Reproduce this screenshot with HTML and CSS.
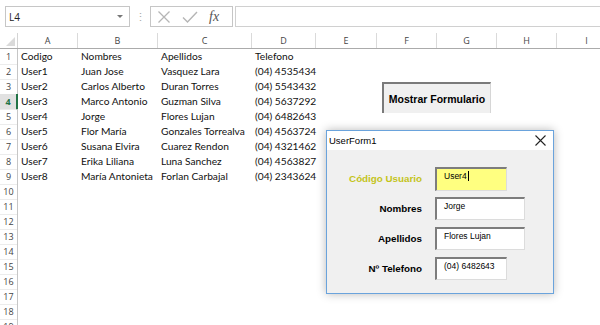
FILE: index.html
```html
<!DOCTYPE html>
<html lang="es">
<head>
    <meta charset="UTF-8">
    <title>Libro1 - UserForm1</title>
    <link rel="stylesheet" href="styles.css">
</head>
<body>
    <div class="screen">
        <div class="formula-bar">
            <div class="name-box">L4<span class="caret"></span></div>
            <div class="grip">&#8942;</div>
            <div class="fx-tools">
                <svg class="tool" width="14" height="14" viewBox="0 0 14 14">
                    <path d="M1.5 1.5L12.5 12.5M12.5 1.5L1.5 12.5" stroke="#b5b5b5" stroke-width="1.3" fill="none"/>
                </svg>
                <svg class="tool" width="16" height="14" viewBox="0 0 16 14">
                    <path d="M1 7.5L5.5 12L15 2" stroke="#b5b5b5" stroke-width="1.4" fill="none"/>
                </svg>
                <span class="fx">fx</span>
            </div>
            <div class="formula-input"></div>
        </div>

        <div class="sheet">
            <div class="row head">
                <div class="corner"><span class="tri"></span></div>
                <div class="col-head">A</div>
                <div class="col-head">B</div>
                <div class="col-head">C</div>
                <div class="col-head">D</div>
                <div class="col-head">E</div>
                <div class="col-head">F</div>
                <div class="col-head">G</div>
                <div class="col-head">H</div>
                <div class="col-head">I</div>
            </div>
            <div class="row">
                <div class="num">1</div>
                <div class="cell">Codigo</div>
                <div class="cell">Nombres</div>
                <div class="cell">Apellidos</div>
                <div class="cell">Telefono</div>
            </div>
            <div class="row">
                <div class="num">2</div>
                <div class="cell">User1</div>
                <div class="cell">Juan Jose</div>
                <div class="cell">Vasquez Lara</div>
                <div class="cell">(04) 4535434</div>
            </div>
            <div class="row">
                <div class="num">3</div>
                <div class="cell">User2</div>
                <div class="cell">Carlos Alberto</div>
                <div class="cell">Duran Torres</div>
                <div class="cell">(04) 5543432</div>
            </div>
            <div class="row">
                <div class="num selected">4</div>
                <div class="cell">User3</div>
                <div class="cell">Marco Antonio</div>
                <div class="cell">Guzman Silva</div>
                <div class="cell">(04) 5637292</div>
            </div>
            <div class="row">
                <div class="num">5</div>
                <div class="cell">User4</div>
                <div class="cell">Jorge</div>
                <div class="cell">Flores Lujan</div>
                <div class="cell">(04) 6482643</div>
            </div>
            <div class="row">
                <div class="num">6</div>
                <div class="cell">User5</div>
                <div class="cell">Flor María</div>
                <div class="cell">Gonzales Torrealva</div>
                <div class="cell">(04) 4563724</div>
            </div>
            <div class="row">
                <div class="num">7</div>
                <div class="cell">User6</div>
                <div class="cell">Susana Elvira</div>
                <div class="cell">Cuarez Rendon</div>
                <div class="cell">(04) 4321462</div>
            </div>
            <div class="row">
                <div class="num">8</div>
                <div class="cell">User7</div>
                <div class="cell">Erika Liliana</div>
                <div class="cell">Luna Sanchez</div>
                <div class="cell">(04) 4563827</div>
            </div>
            <div class="row">
                <div class="num">9</div>
                <div class="cell">User8</div>
                <div class="cell">María Antonieta</div>
                <div class="cell">Forlan Carbajal</div>
                <div class="cell">(04) 2343624</div>
            </div>
            <div class="row"><div class="num">10</div></div>
            <div class="row"><div class="num">11</div></div>
            <div class="row"><div class="num">12</div></div>
            <div class="row"><div class="num">13</div></div>
            <div class="row"><div class="num">14</div></div>
            <div class="row"><div class="num">15</div></div>
            <div class="row"><div class="num">16</div></div>
            <div class="row"><div class="num">17</div></div>
            <div class="row"><div class="num">18</div></div>
            <div class="row"><div class="num">19</div></div>
        </div>

        <!-- ActiveX button sitting on the sheet -->
        <button class="show-form">Mostrar Formulario</button>

        <!-- VBA UserForm -->
        <div class="userform">
            <div class="uf-title">
                <span>UserForm1</span>
                <svg class="uf-close" width="11" height="11" viewBox="0 0 11 11">
                    <path d="M0.5 0.5L10.5 10.5M10.5 0.5L0.5 10.5" stroke="#222" stroke-width="1.1" fill="none"/>
                </svg>
            </div>
            <div class="uf-body">
                <div class="uf-label key">Código Usuario</div>
                <div class="uf-input short key-box">User4<span class="cursor"></span></div>

                <div class="uf-label">Nombres</div>
                <div class="uf-input">Jorge</div>

                <div class="uf-label">Apellidos</div>
                <div class="uf-input">Flores Lujan</div>

                <div class="uf-label">Nº Telefono</div>
                <div class="uf-input short">(04) 6482643</div>
            </div>
        </div>
    </div>
</body>
</html>
```

FILE: styles.css
```css
body {
    margin: 0;
    background-color: #fff;
    font-family: 'Lato', 'Liberation Sans', sans-serif;
    color: #000;
}

.screen {
    position: relative;
    width: 600px;
    height: 325px;
    overflow: hidden;
}

/* formula bar */
.formula-bar {
    display: flex;
    align-items: center;
    height: 21px;
    padding-top: 6px;
    margin-bottom: 6px;
}

.name-box {
    box-sizing: border-box;
    display: flex;
    align-items: center;
    justify-content: space-between;
    width: 125px;
    height: 21px;
    margin-left: 5px;
    padding: 0 6px 0 3px;
    border: 1px solid #c6c6c6;
    font-family: 'Open Sans', sans-serif;
    font-size: 10px;
    color: #222;
}

.caret {
    width: 0;
    height: 0;
    border-left: 3px solid transparent;
    border-right: 3px solid transparent;
    border-top: 3px solid #777;
}

.grip {
    width: 20px;
    text-align: center;
    color: #aaa;
    font-size: 11px;
}

.fx-tools {
    box-sizing: border-box;
    display: flex;
    align-items: center;
    width: 83px;
    height: 21px;
    padding-left: 6px;
    border: 1px solid #c6c6c6;
}

.tool {
    margin-right: 11px;
}

.fx {
    font-family: 'Liberation Serif', serif;
    font-style: italic;
    font-size: 14px;
    color: #555;
}

.formula-input {
    box-sizing: border-box;
    flex: 1;
    height: 21px;
    margin-left: 2px;
    border-top: 1px solid #d0d0d0;
    border-bottom: 1px solid #d0d0d0;
    border-left: 1px solid #d0d0d0;
}

/* worksheet */
.row {
    display: grid;
    grid-template-columns: 18px 60px 80px 94px 64px 61px 60px 60px 60px 60px;
    height: 15px;
    line-height: 15px;
    font-size: 10.2px;
    color: #111;
}

.row.head {
    box-sizing: border-box;
    height: 16px;
    border-bottom: 1px solid #ababab;
    font-family: 'Open Sans', sans-serif;
    font-size: 9px;
    color: #444;
}

.corner {
    position: relative;
    border-right: 1px solid #d4d4d4;
}

.tri {
    position: absolute;
    right: 2px;
    bottom: 2px;
    width: 0;
    height: 0;
    border-left: 9px solid transparent;
    border-bottom: 9px solid #dadada;
}

.col-head {
    border-right: 1px solid #dadada;
    text-align: center;
}

.num {
    box-sizing: border-box;
    border-right: 1px solid #c6c6c6;
    border-bottom: 1px solid #ececec;
    font-family: 'Open Sans', sans-serif;
    font-size: 9px;
    color: #444;
    text-align: center;
}

.num.selected {
    background-color: #e1e1e1;
    border-right: 2px solid #217346;
    color: #217346;
    font-weight: bold;
}

.cell {
    padding-left: 3px;
    white-space: nowrap;
}

/* ActiveX button */
.show-form {
    position: absolute;
    left: 382px;
    top: 82px;
    width: 109px;
    height: 31px;
    padding: 0;
    background-color: #f0f0f0;
    border: none;
    border-top: 2px solid #7a7a7a;
    border-left: 2px solid #7a7a7a;
    border-right: 1px solid #d6d6d6;
    font-family: 'Liberation Sans', sans-serif;
    font-size: 10.5px;
    font-weight: bold;
    color: #000;
}

/* UserForm window */
.userform {
    position: absolute;
    left: 326px;
    top: 130px;
    box-sizing: border-box;
    width: 228px;
    height: 164px;
    background-color: #f0f0f0;
    border: 1px solid #6aa3dc;
    box-shadow: 0 0 9px rgba(0, 0, 0, 0.28);
    font-family: 'Liberation Sans', sans-serif;
}

.uf-title {
    display: flex;
    align-items: center;
    justify-content: space-between;
    height: 19px;
    padding: 0 7px 0 2px;
    background-color: #fff;
    font-size: 9.5px;
    color: #000;
}

.uf-body {
    display: grid;
    grid-template-columns: 95px auto;
    grid-auto-rows: 23px;
    column-gap: 13px;
    row-gap: 7px;
    align-items: center;
    padding-top: 17px;
}

.uf-label {
    text-align: right;
    font-size: 9.8px;
    font-weight: bold;
    color: #000;
}

.uf-label.key {
    color: #c4c41a;
}

.uf-input {
    box-sizing: border-box;
    width: 90px;
    height: 23px;
    padding: 2px 0 0 7px;
    background-color: #fff;
    border-top: 2px solid #7d7d7d;
    border-left: 2px solid #7d7d7d;
    border-right: 1px solid #dcdcdc;
    border-bottom: 1px solid #dcdcdc;
    font-size: 8.5px;
    line-height: 10px;
    color: #000;
}

.uf-input.short {
    width: 72px;
}

.uf-input.key-box {
    height: 24px;
    background-color: #ffff80;
}

.cursor {
    display: inline-block;
    width: 1px;
    height: 10px;
    margin-left: 1px;
    vertical-align: top;
    background-color: #000;
}
```
